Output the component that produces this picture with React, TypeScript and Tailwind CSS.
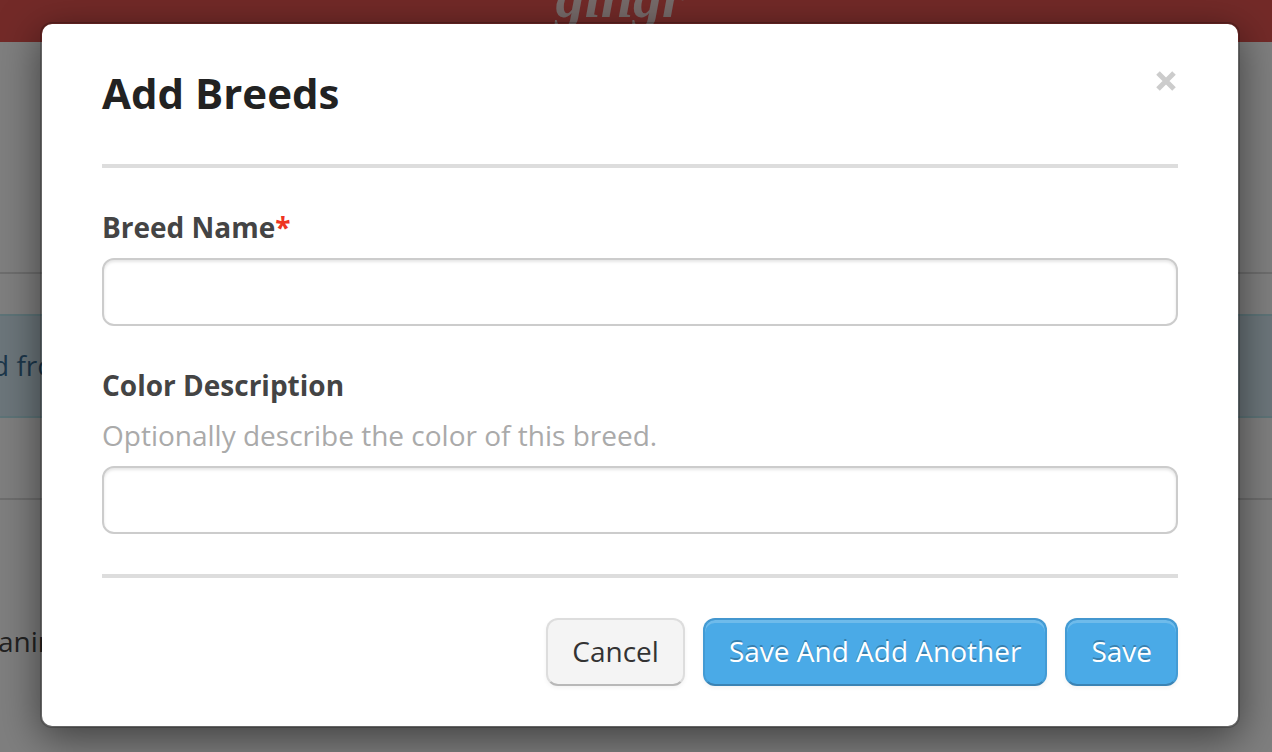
import React, { useState } from 'react';

const inputClass =
  'block w-full h-[68px] px-5 rounded-xl border-2 border-[#cccccc] bg-white text-[28px] text-[#444444] shadow-[inset_0_2px_3px_rgba(0,0,0,0.1)] outline-none';

const primaryClass =
  'h-[68px] px-6 pb-[2px] rounded-xl border-2 border-[#439bd4] border-b-[#3a83b4] border-t-[#4397cf] bg-[#4aaae7] text-white [text-shadow:0_-2px_0_rgba(0,0,0,0.25)] shadow-[inset_0_3px_0_rgba(255,255,255,0.2),0_2px_4px_rgba(0,0,0,0.05)]';

const PageBehind: React.FC = () => (
  <div aria-hidden="true" className="text-[28px] leading-10 text-[#444444]">
    <header className="flex h-[42px] justify-center overflow-hidden bg-[#e65450] pr-8">
      <span className="-mt-8 font-['Liberation_Serif',serif] text-[58px] leading-[60px] font-bold italic text-[#efd6d5]">gingr</span>
    </header>
    <div className="mt-[230px] border-t-2 border-[#dddddd]" />
    <div className="mt-10 flex h-[104px] items-center overflow-hidden border-y-2 border-[#bce8f1] bg-[#d9edf7] pb-[2px] text-[#3a6f97]">
      <span className="-ml-2 whitespace-nowrap">d from</span>
    </div>
    <div className="mt-20 border-t-2 border-[#dddddd]" />
    <p className="mt-[121px] -ml-0.5">animals</p>
  </div>
);

const App: React.FC = () => {
  const [breedName, setBreedName] = useState('');
  const [color, setColor] = useState('');

  return (
    <div className="relative min-h-screen overflow-hidden bg-white font-['Open_Sans',sans-serif]">
      <PageBehind />

      {/* Backdrop */}
      <div className="absolute inset-0 bg-black/50 pt-[22px] pr-8 pl-10">
        <form
          role="dialog"
          aria-modal="true"
          aria-labelledby="modal-title"
          onSubmit={(e) => e.preventDefault()}
          className="rounded-xl border-2 border-black/20 bg-white bg-clip-padding px-[60px] pb-10 text-[28px] leading-[38px] shadow-[0_10px_40px_rgba(0,0,0,0.5)]"
        >
          <div className="flex items-start justify-between border-b-4 border-[#dddddd] pt-10 pb-[42px]">
            <h1 id="modal-title" className="text-[42px] leading-[58px] font-bold text-[#222222]">Add Breeds</h1>
            <button type="button" aria-label="Close" className="mt-[5px] p-[2px] text-[#cccccc]">
              <svg viewBox="0 0 20 20" className="h-5 w-5" fill="none" stroke="currentColor" strokeWidth="5">
                <path d="M2 2 18 18M18 2 2 18" />
              </svg>
            </button>
          </div>

          <div className="py-10">
            <label htmlFor="breed-name" className="mb-3 block font-bold text-[#444444]">
              Breed Name<span className="text-[#ee3322]">*</span>
            </label>
            <input
              id="breed-name"
              type="text"
              required
              value={breedName}
              onChange={(e) => setBreedName(e.target.value)}
              className={inputClass}
            />

            <label htmlFor="color-description" className="mt-10 mb-3 block font-bold text-[#444444]">
              Color Description
            </label>
            <p id="color-help" className="mb-3 text-[#aaaaaa]">Optionally describe the color of this breed.</p>
            <input
              id="color-description"
              type="text"
              aria-describedby="color-help"
              value={color}
              onChange={(e) => setColor(e.target.value)}
              className={inputClass}
            />
          </div>

          <div className="flex justify-end gap-[18px] border-t-4 border-[#dddddd] pt-10">
            <button
              type="button"
              className="h-[68px] rounded-xl border-2 border-[#dddddd] border-b-[#b8b8b8] bg-[#f4f4f4] px-6 pb-[2px] text-[#333333] shadow-[0_2px_4px_rgba(0,0,0,0.05)]"
            >
              Cancel
            </button>
            <button type="submit" className={primaryClass}>Save And Add Another</button>
            <button type="submit" className={primaryClass}>Save</button>
          </div>
        </form>
      </div>
    </div>
  );
};

export default App;
